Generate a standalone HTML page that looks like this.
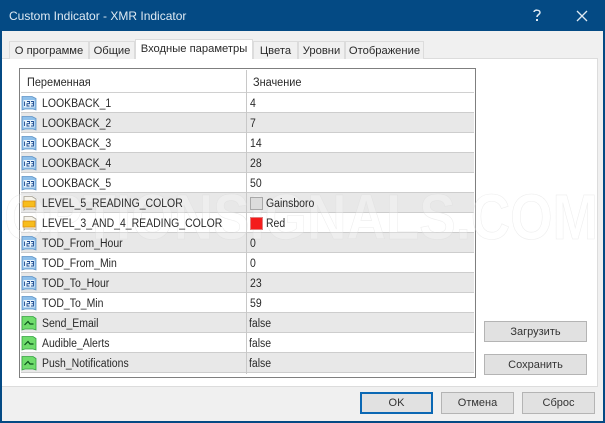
<!DOCTYPE html>
<html><head><meta charset="utf-8"><style>
html,body{margin:0;padding:0}
body{width:605px;height:423px;position:relative;overflow:hidden;background:#f0f0f0;font-family:"Liberation Sans",sans-serif;font-size:11.5px;color:#2a2a2a}
div{position:absolute;box-sizing:border-box;white-space:nowrap}
.t{height:16px;line-height:16px;transform:translateY(1px) scaleX(.91);transform-origin:left center;z-index:4}
.h{height:16px;line-height:16px;transform:scaleX(.95);transform-origin:left center}
.tab{top:41px;height:18px;line-height:19px;background:#f0f0f0;border:1px solid #dcdcdc;border-bottom:none;text-align:center;font-size:11.2px}
.r{left:21px;width:453px;height:20px;border-bottom:1px solid #cdcdcd}
.g{background:#e8e8e8}
.btn{background:#e1e1e1;border:1px solid #b4b4b4;text-align:center;line-height:20px;font-size:11px;color:#333}
svg{position:absolute}
</style></head><body>
<div style="left:0;top:0;width:605px;height:31px;background:#044a84"></div>
<div style="left:9px;top:8px;color:#dfeaf3;font-size:12px;height:16px;line-height:16px">Custom Indicator - XMR Indicator</div>
<svg style="left:530px;top:7px" width="14" height="16"><path d="M4 5C4 2.5 10 2.5 10 5.5C10 7.5 7 7.5 7 10" stroke="#dfeaf3" stroke-width="1.5" fill="none"/><rect x="6" y="12" width="2" height="2" fill="#dfeaf3"/></svg>
<svg style="left:575px;top:9px" width="14" height="14"><path d="M2 2L12 12M12 2L2 12" stroke="#dfeaf3" stroke-width="1.3" fill="none"/></svg>
<div style="left:0;top:31px;width:2px;height:392px;background:#044a84"></div>
<div style="left:603px;top:31px;width:2px;height:392px;background:#044a84"></div>
<div style="left:0;top:421px;width:605px;height:2px;background:#044a84"></div>

<div style="left:2px;top:58px;width:596px;height:329px;background:#fff;border:1px solid #dcdcdc;border-left:none"></div>
<div class="tab" style="left:9px;width:80px">О программе</div>
<div class="tab" style="left:89px;width:46px">Общие</div>
<div class="tab" style="left:135px;width:118px;top:39px;height:20px;line-height:18px;background:#fff;z-index:2">Входные параметры</div>
<div class="tab" style="left:253px;width:45px">Цвета</div>
<div class="tab" style="left:298px;width:47px">Уровни</div>
<div class="tab" style="left:345px;width:79px">Отображение</div>

<div style="left:19px;top:68px;width:457px;height:310px;background:#fff;border:1px solid #7f7f7f"></div>
<div class="h" style="left:27px;top:75px">Переменная</div>
<div class="h" style="left:253px;top:75px">Значение</div>
<div style="left:21px;top:92px;width:453px;height:1px;background:#d0d0d0"></div>

<div class="r" style="top:93px"></div>
<div class="r g" style="top:113px"></div>
<div class="r" style="top:133px"></div>
<div class="r g" style="top:153px"></div>
<div class="r" style="top:173px"></div>
<div class="r g" style="top:193px"></div>
<div class="r" style="top:213px"></div>
<div class="r g" style="top:233px"></div>
<div class="r" style="top:253px"></div>
<div class="r g" style="top:273px"></div>
<div class="r" style="top:293px"></div>
<div class="r g" style="top:313px"></div>
<div class="r" style="top:333px"></div>
<div class="r g" style="top:353px"></div>
<div style="left:246px;top:70px;width:1px;height:304px;background:#c8c8c8"></div>

<svg style="left:0;top:0" width="605" height="423"><text x="4" y="239" textLength="594" lengthAdjust="spacingAndGlyphs" font-family="Liberation Sans" font-weight="bold" font-size="64" fill="#fff" fill-opacity=".25" stroke="#dcdcdc" stroke-opacity=".5" stroke-width=".6">OPTIONSIGNALS.COM</text></svg>

<svg style="left:0;top:0;z-index:3" width="605" height="423">
<defs>
<g id="n"><path d="M1 1.5H11L15 3.5V15L12 14H4L1 15Z" fill="#8fc0ea" stroke="#5f93c6" stroke-width=".8"/><rect x="2.5" y="5" width="11" height="7.5" fill="#e4f1fb"/><path d="M3.5 6.5V11M6 6.5H8.5V8.7H6V11H8.5M10 6.5H12.5V11H10M10.5 8.7H12.5" stroke="#1a4a90" stroke-width=".9" fill="none"/></g>
<g id="c"><path d="M3 1.5H11L15 4V15L13 14H4L3 15Z" fill="#f6f3ea" stroke="#a39f92" stroke-width=".8"/><rect x="2" y="6" width="12" height="6" fill="#f7bd1c" stroke="#dd8f10" stroke-width=".8"/></g>
<g id="b"><path d="M1 1.5H12L15 3.5V15L12 14H4L1 15Z" fill="#6fdc6c" stroke="#35a143" stroke-width=".8"/><path d="M3.5 10L7 6.5L9 9H12.5" stroke="#08501a" stroke-width="1.2" fill="none"/></g>
</defs>
<use href="#n" x="21" y="95"/><use href="#n" x="21" y="115"/><use href="#n" x="21" y="135"/><use href="#n" x="21" y="155"/><use href="#n" x="21" y="175"/>
<use href="#c" x="21" y="195"/><use href="#c" x="21" y="215"/>
<use href="#n" x="21" y="235"/><use href="#n" x="21" y="255"/><use href="#n" x="21" y="275"/><use href="#n" x="21" y="295"/>
<use href="#b" x="21" y="315"/><use href="#b" x="21" y="335"/><use href="#b" x="21" y="355"/>
</svg>

<div class="t" style="left:42px;top:95px">LOOKBACK_1</div><div class="t" style="left:250px;top:95px">4</div>
<div class="t" style="left:42px;top:115px">LOOKBACK_2</div><div class="t" style="left:250px;top:115px">7</div>
<div class="t" style="left:42px;top:135px">LOOKBACK_3</div><div class="t" style="left:250px;top:135px">14</div>
<div class="t" style="left:42px;top:155px">LOOKBACK_4</div><div class="t" style="left:250px;top:155px">28</div>
<div class="t" style="left:42px;top:175px">LOOKBACK_5</div><div class="t" style="left:250px;top:175px">50</div>
<div class="t" style="left:42px;top:195px">LEVEL_5_READING_COLOR</div>
<div style="left:250px;top:197px;width:13px;height:13px;background:#dcdcdc;border:1px solid #a8a8a8;z-index:4"></div><div class="t" style="left:266px;top:195px">Gainsboro</div>
<div class="t" style="left:42px;top:215px">LEVEL_3_AND_4_READING_COLOR</div>
<div style="left:250px;top:217px;width:13px;height:13px;background:#f41c1c;border:1px solid #e08080;z-index:4"></div><div class="t" style="left:266px;top:215px">Red</div>
<div class="t" style="left:42px;top:235px">TOD_From_Hour</div><div class="t" style="left:250px;top:235px">0</div>
<div class="t" style="left:42px;top:255px">TOD_From_Min</div><div class="t" style="left:250px;top:255px">0</div>
<div class="t" style="left:42px;top:275px">TOD_To_Hour</div><div class="t" style="left:250px;top:275px">23</div>
<div class="t" style="left:42px;top:295px">TOD_To_Min</div><div class="t" style="left:250px;top:295px">59</div>
<div class="t" style="left:42px;top:315px">Send_Email</div><div class="t" style="left:249px;top:315px">false</div>
<div class="t" style="left:42px;top:335px">Audible_Alerts</div><div class="t" style="left:249px;top:335px">false</div>
<div class="t" style="left:42px;top:355px">Push_Notifications</div><div class="t" style="left:249px;top:355px">false</div>

<div class="btn" style="left:484px;top:321px;width:103px;height:21px">Загрузить</div>
<div class="btn" style="left:484px;top:354px;width:103px;height:21px">Сохранить</div>
<div class="btn" style="left:360px;top:392px;width:73px;height:22px;border:2px solid #0b68b4;line-height:18px">OK</div>
<div class="btn" style="left:441px;top:392px;width:73px;height:22px">Отмена</div>
<div class="btn" style="left:522px;top:392px;width:73px;height:22px">Сброс</div>
</body></html>
